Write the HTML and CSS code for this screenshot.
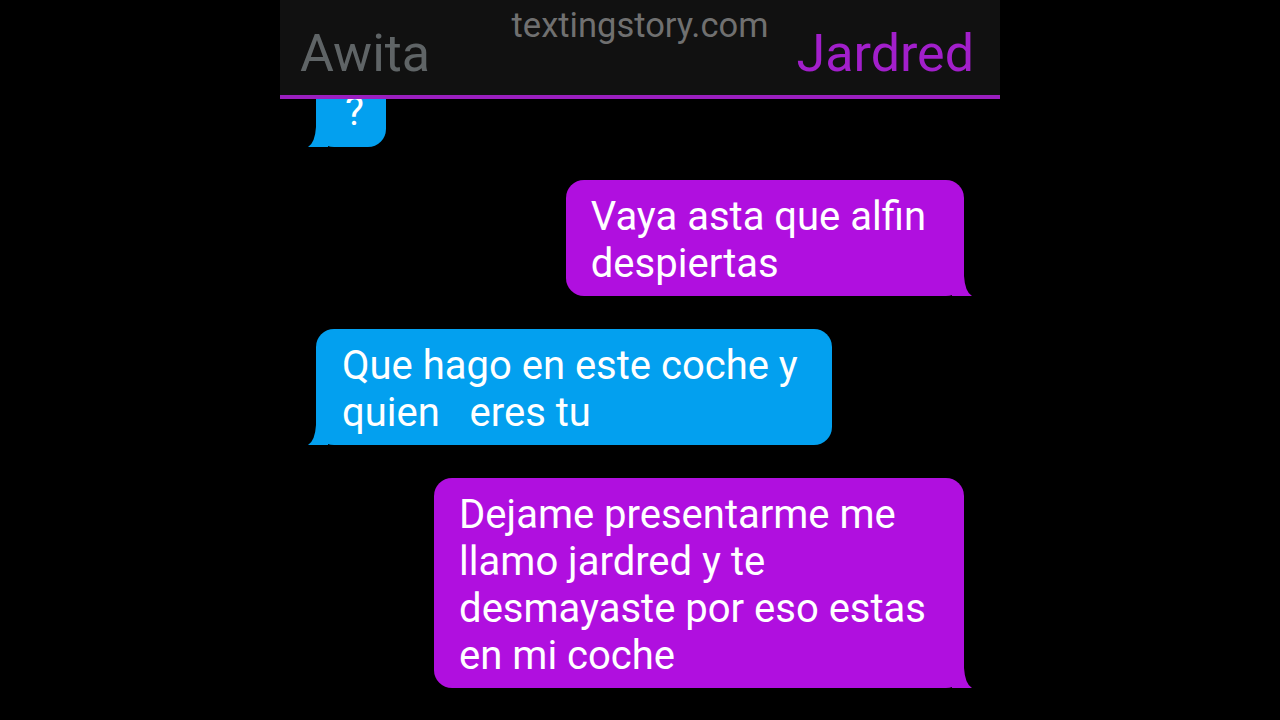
FILE: index.html
```html
<!DOCTYPE html>
<html lang="es">
  <head>
    <meta charset="UTF-8" />
    <meta name="viewport" content="width=device-width, initial-scale=1.0" />
    <title>Awita y Jardred</title>
    <link rel="stylesheet" href="styles.css">
  </head>
  <body>
    <div class="phone">
      <div class="chat-header">
        <span class="name name-left">Awita</span>
        <span class="watermark">textingstory.com</span>
        <span class="name name-right">Jardred</span>
      </div>
      <div class="chat">
        <div class="bubble bubble-left bubble-short">
          ?
          <svg class="tail" viewBox="0 0 20 20"><path d="M20 0 H8 Q7 16 0 20 H20 Z" /></svg>
        </div>
        <div class="bubble bubble-right">
          Vaya asta que alfin<br />despiertas
          <svg class="tail" viewBox="0 0 20 20"><path d="M0 0 H12 Q13 16 20 20 H0 Z" /></svg>
        </div>
        <div class="bubble bubble-left">
          Que hago en este coche y<br />quien&nbsp;&nbsp; eres tu
          <svg class="tail" viewBox="0 0 20 20"><path d="M20 0 H8 Q7 16 0 20 H20 Z" /></svg>
        </div>
        <div class="bubble bubble-right">
          Dejame presentarme me<br />llamo jardred y te<br />desmayaste por eso estas<br />en mi coche
          <svg class="tail" viewBox="0 0 20 20"><path d="M0 0 H12 Q13 16 20 20 H0 Z" /></svg>
        </div>
      </div>
    </div>
  </body>
</html>
```

FILE: styles.css
```css
body {
  margin: 0;
  background-color: #000000;
  font-family: Roboto, "Liberation Sans", sans-serif;
}

.phone {
  width: 720px;
  height: 720px;
  margin: 0 auto;
  display: flex;
  flex-direction: column;
  background-color: #000000;
}

.chat-header {
  position: relative;
  z-index: 1;
  flex-shrink: 0;
  height: 99px;
  box-sizing: border-box;
  padding: 24px 26px 0 20px;
  display: flex;
  justify-content: space-between;
  align-items: flex-start;
  background-color: #111111;
  border-bottom: 4px solid #9b1fc0;
}

.name {
  font-size: 52px;
  line-height: 60px;
}

.name-left {
  color: #5f6466;
}

.name-right {
  color: #a21fcb;
}

.watermark {
  position: absolute;
  top: 5px;
  left: 0;
  right: 0;
  text-align: center;
  font-size: 34.5px;
  line-height: 40px;
  color: #707070;
}

.chat {
  flex: 1;
  overflow: hidden;
  display: flex;
  flex-direction: column;
  justify-content: flex-end;
  gap: 33px;
  padding: 0 36px 32px 36px;
}

.bubble {
  position: relative;
  flex-shrink: 0;
  border-radius: 18px;
  color: #ffffff;
  font-size: 40px;
  line-height: 47px;
  white-space: nowrap;
}

.bubble-left {
  align-self: flex-start;
  padding: 13px 34px 9px 26px;
  background-color: #03a0ef;
  fill: #03a0ef;
}

.bubble-right {
  align-self: flex-end;
  padding: 13px 38px 9px 25px;
  background-color: #b00fdf;
  fill: #b00fdf;
}

.bubble-short {
  padding: 10px 22px 12px 29px;
}

.tail {
  position: absolute;
  bottom: 0;
  width: 20px;
  height: 20px;
}

.bubble-right .tail {
  right: -8px;
}

.bubble-left .tail {
  left: -8px;
}
```
